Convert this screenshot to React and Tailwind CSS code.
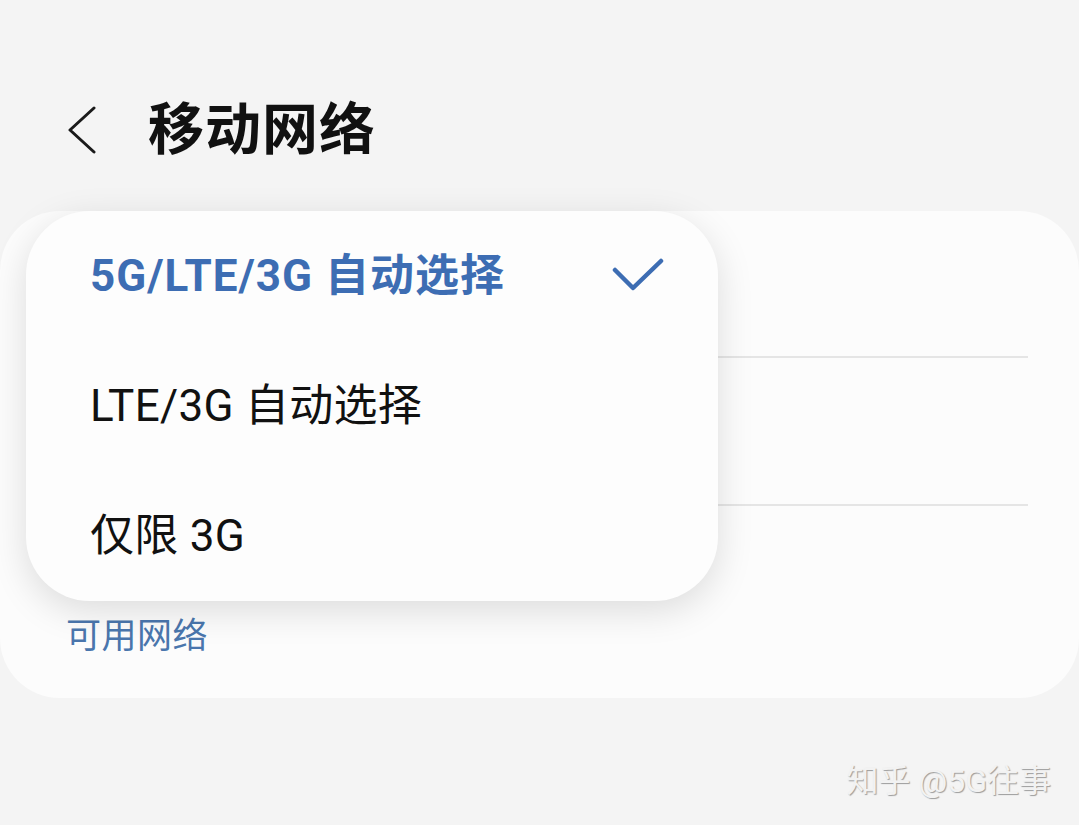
const font = { fontFamily: 'Roboto, "Noto Sans CJK SC", sans-serif' };

function Chevron() {
    return (
        <svg width="32" height="48" viewBox="0 0 32 48" fill="none">
            <path d="M28 2 L4 24 L28 46" stroke="#1a1a1a" strokeWidth="3" strokeLinecap="round" strokeLinejoin="round" />
        </svg>
    );
}

function Check() {
    return (
        <svg width="52" height="36" viewBox="0 0 52 36" fill="none">
            <path d="M3 12 L21 30 L49 3" stroke="#3d6db3" strokeWidth="4.5" strokeLinecap="round" strokeLinejoin="round" />
        </svg>
    );
}

const options = [
    { label: '5G/LTE/3G 自动选择', selected: true },
    { label: 'LTE/3G 自动选择', selected: false },
    { label: '仅限 3G', selected: false },
];

export default function App() {
    return (
        <div className="w-[1079px] h-[825px] overflow-hidden bg-[#f4f4f4]" style={font}>
            <header className="h-[211px] pt-[96px]">
                <div className="h-[68px] flex items-center">
                    <div className="ml-[66px] w-[32px] flex items-center"><Chevron /></div>
                    <h1 className="ml-[50px] text-[56px] font-bold text-[#111] leading-none tracking-[1px]">移动网络</h1>
                </div>
            </header>

            <section className="relative bg-[#fcfcfc] rounded-[60px]">
                <div className="ml-[66px] mr-[51px] h-[147px] border-b-2 border-[#e5e5e5]" />
                <div className="ml-[66px] mr-[51px] h-[148px] border-b-2 border-[#e5e5e5]" />
                <div className="h-[96px]" />
                <div className="h-[70px] px-[66px] flex items-center">
                    <span className="text-[35px] tracking-[0.5px] text-[#4a76ad]">可用网络</span>
                </div>
                <div className="h-[26px]" />

                <div className="absolute left-[26px] top-0 w-[692px] h-[390px] rounded-[64px] bg-[#fdfdfd] shadow-[0_10px_36px_rgba(0,0,0,0.13)] flex flex-col">
                    {options.map(o => (
                        <div key={o.label} className="h-[130px] flex items-center pl-[64px] pr-[54px]">
                            <span className={o.selected
                                ? 'flex-1 text-[44px] tracking-[1px] font-bold text-[#3d6db3]'
                                : 'flex-1 text-[44px] tracking-[0.3px] text-[#111]'}>
                                {o.label}
                            </span>
                            {o.selected && <Check />}
                        </div>
                    ))}
                </div>
            </section>

            <div className="flex justify-end pr-[28px] mt-[59px]">
                <span className="text-[32px] text-[#f2f2f2] [text-shadow:1px_1px_1px_#9c9c9c]">知乎 @5G往事</span>
            </div>
        </div>
    );
}
